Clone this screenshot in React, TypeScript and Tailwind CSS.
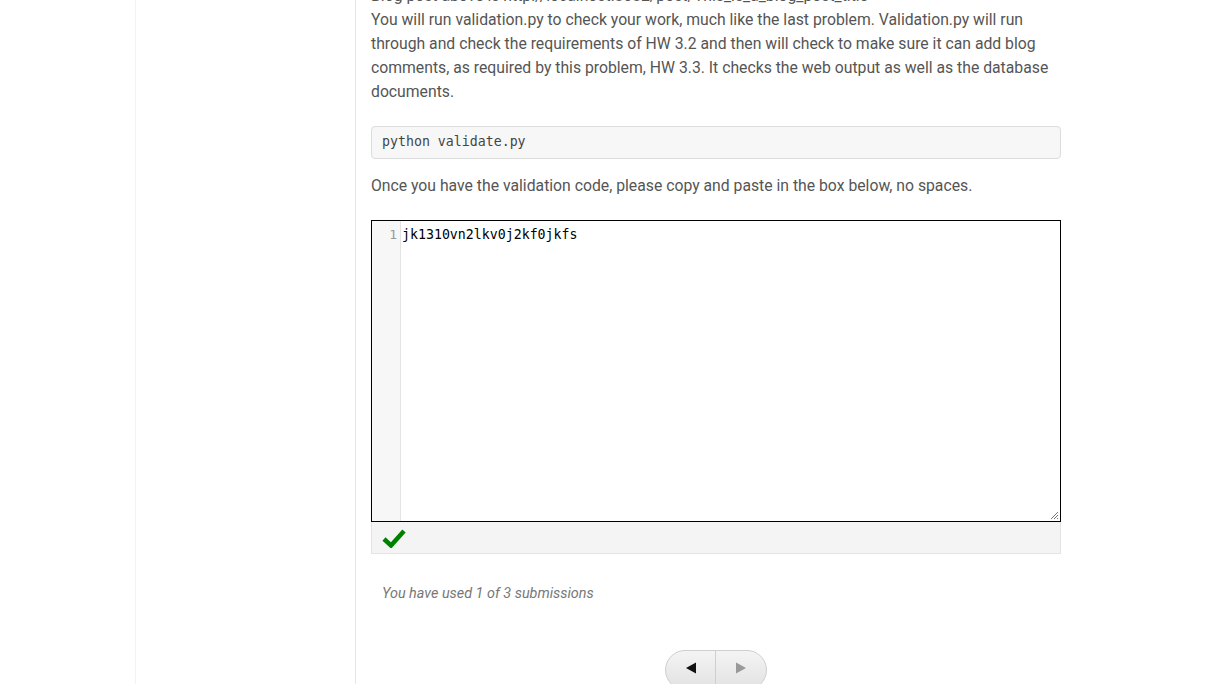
import React from 'react'

const lines = [
  'You will run validation.py to check your work, much like the last problem. Validation.py will run',
  'through and check the requirements of HW 3.2 and then will check to make sure it can add blog',
  'comments, as required by this problem, HW 3.3. It checks the web output as well as the database',
  'documents.',
]

export default function App() {
  return (
    <div className="flex h-[684px] overflow-hidden bg-white font-['Roboto',sans-serif] text-[#555]">
      <div className="ml-[135px] w-[221px] shrink-0 border-l border-r border-l-[#f3f3f3] border-r-[#e6e6e6]" />
      <div className="w-[690px] ml-[15px] -mt-[16px]">
        <div className="text-[15.75px] leading-6 whitespace-nowrap">
          <div>Blog post above is http://localhost:8082/post/This_is_a_blog_post_title</div>
          {lines.map((l) => (
            <div key={l}>{l}</div>
          ))}
        </div>

        <pre className="mt-[22px] h-[33px] rounded border border-[#dcdcdc] bg-[#f7f7f7] px-[10px] pt-[5px] font-['DejaVu_Sans_Mono',monospace] text-[13.25px] leading-5 text-[#444]">
          python validate.py
        </pre>

        <p className="mt-[15px] text-[15.75px] leading-6">
          Once you have the validation code, please copy and paste in the box below, no spaces.
        </p>

        <div className="mt-[22px] relative flex h-[302px] border border-black bg-white">
          <div className="w-[29px] shrink-0 border-r border-[#e3e3e3] bg-[#f7f7f7] pr-[3px] pt-[4px] text-right font-['DejaVu_Sans_Mono',monospace] text-[13px] leading-5 text-[#999]">
            1
          </div>
          <div className="pl-[1px] pt-[4px] font-['DejaVu_Sans_Mono',monospace] text-[13.25px] leading-5 text-black">
            jk1310vn2lkv0j2kf0jkfs
          </div>
          <svg className="absolute bottom-[1px] right-[1px]" width="9" height="9" viewBox="0 0 9 9">
            <path d="M8 1 L1 8 M8 4 L4 8 M8 7 L7 8" stroke="#777" strokeWidth="1" />
          </svg>
        </div>

        <div className="flex h-[32px] items-center border border-t-0 border-[#e3e3e3] bg-[#f4f4f4] pl-[10px]">
          <svg width="24" height="20" viewBox="0 0 24 20">
            <path d="M2 11 L9 17.5 L22 3" fill="none" stroke="#008000" strokeWidth="4.5" strokeLinejoin="miter" />
          </svg>
        </div>

        <p className="mt-[28px] pl-[11px] text-[14.4px] italic leading-6 text-[#777]">
          You have used 1 of 3 submissions
        </p>

        <div className="mt-[44px] flex justify-center">
          <div className="flex h-[40px] overflow-hidden rounded-full border border-[#cfcfcf] bg-gradient-to-b from-[#f4f4f4] to-[#e2e2e2]">
            <button className="flex w-[50px] items-center justify-center border-r border-[#cfcfcf] pb-[4px]">
              <svg width="12" height="12" viewBox="0 0 12 12">
                <path d="M1 6 L11 0.5 L11 11.5 Z" fill="#111" />
              </svg>
            </button>
            <button className="flex w-[50px] items-center justify-center pb-[4px]">
              <svg width="12" height="12" viewBox="0 0 12 12">
                <path d="M11 6 L1 0.5 L1 11.5 Z" fill="#999" />
              </svg>
            </button>
          </div>
        </div>
      </div>
    </div>
  )
}
